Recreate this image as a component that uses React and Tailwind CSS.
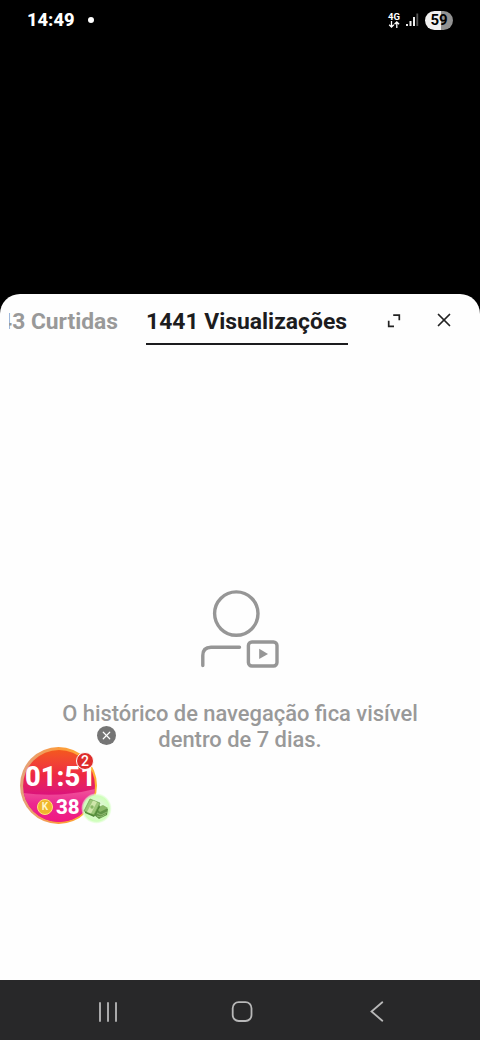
import { X } from "lucide-react";

const StatusBar = () => (
  <header className="flex h-10 shrink-0 items-center justify-between pl-[27px] pr-[27px] text-white">
    <div className="flex items-center gap-[13px]">
      <span className="pt-px text-[18.3px] leading-none font-extrabold">14:49</span>
      <span className="mt-px size-[6px] rounded-full bg-white" />
    </div>
    <div className="flex items-center">
      <div className="flex w-3 flex-col items-center">
        <span className="text-[9.5px] leading-[8px] font-bold">4G</span>
        <svg className="h-[7px] w-3" viewBox="0 0 12 7" fill="none" stroke="#fff" strokeWidth="1.3">
          <path d="M3.5 0v6M1.2 3.8 3.5 6l2.3-2.2M8.8 7V1M6.5 3.2 8.8 1l2.3 2.2" />
        </svg>
      </div>
      <svg className="ml-1.5 h-[14px] w-[13px]" viewBox="0 0 13 14">
        <rect x="0" y="11" width="2" height="2" fill="#eee" />
        <rect x="3.5" y="8" width="2" height="5" fill="#eee" />
        <rect x="7" y="4" width="2" height="9" fill="#eee" />
        <rect x="10.4" y="0.5" width="1.8" height="12.5" fill="#555" />
      </svg>
      <div className="ml-[6px] flex h-[19px] w-7 items-center justify-center rounded-full bg-linear-to-r from-[#f0f0f0] from-58% to-[#929292] to-58%">
        <span className="pt-px text-[15px] leading-none font-bold text-black">59</span>
      </div>
    </div>
  </header>
);

const Tabs = () => (
  <div className="flex h-[51px] shrink-0 items-start pl-[9px]">
    <div className="flex h-[51px] w-[109px] justify-end overflow-hidden">
      <span className="pt-[14px] text-[22.8px] leading-7 font-bold whitespace-nowrap text-[#999]">
        43 Curtidas
      </span>
    </div>
    <div className="ml-[28px] h-[51px] w-[202px] border-b-2 border-[#1c1c1e] pt-[14px] text-[22.9px] leading-7 font-bold whitespace-nowrap text-[#1c1c1e]">
      1441 Visualizações
    </div>
    <button aria-label="Expandir" className="mt-[20px] ml-[39px]">
      <svg className="size-[14px]" viewBox="0 0 14 14" fill="none" stroke="#222" strokeWidth="1.7">
        <path d="M6.2 1.2H12.3V6.2M1.7 6.8v5.5H7" />
      </svg>
    </button>
    <button aria-label="Fechar" className="mt-[15px] ml-[32px]">
      <X size={22} strokeWidth={1.9} color="#222" />
    </button>
  </div>
);

const EmptyHistory = () => (
  <div className="flex flex-col items-center pt-[244px]">
    <svg className="h-[80px] w-[80px]" viewBox="200 589 80 80" fill="none" stroke="#969696" strokeWidth="3.4">
      <circle cx="236.3" cy="613.6" r="21.7" />
      <path d="M202.8 665.5V655.5Q202.8 647.2 211 647.2H239.5" strokeLinecap="round" />
      <rect x="248.4" y="642" width="28.6" height="24" rx="3.5" />
      <path d="M259.2 648.7v10.4l8.8-5.2z" fill="#969696" stroke="none" />
    </svg>
    <p className="mt-[32px] w-[380px] text-center text-[21.9px] leading-[25.5px] font-medium text-[#999]">
      O histórico de navegação fica visível dentro de 7 dias.
    </p>
  </div>
);

const RewardTimer = () => (
  <div className="absolute top-[726px] left-[20px] h-[100px] w-[98px] text-white">
    <button aria-label="Fechar" className="absolute top-0 left-[77px] flex size-[19px] items-center justify-center rounded-full bg-[#757575]">
      <X size={13} strokeWidth={2.2} />
    </button>
    <div className="absolute top-[21px] left-0 size-[77px] rounded-full bg-linear-to-r from-[#e3a27c] via-[#fb9a3c] to-[#ffb233] p-[2.5px]">
      <div className="relative size-full overflow-hidden rounded-full bg-linear-to-b from-[#f4571c] via-[#ee2742] via-35% to-[#dd1478] to-60%">
        <svg className="absolute inset-0 size-full" viewBox="0 0 72 72">
          <defs>
            <linearGradient id="lower" x1="0" y1="0" x2="0" y2="1">
              <stop stopColor="#f0569a" />
              <stop offset="0.45" stopColor="#ec2890" />
              <stop offset="1" stopColor="#f01880" />
            </linearGradient>
          </defs>
          <path d="M0 43Q36 48 72 39V72H0z" fill="url(#lower)" />
        </svg>
      </div>
    </div>
    <span className="absolute top-[37px] left-[5px] text-[27.3px] leading-[29px] font-extrabold">01:51</span>
    <div className="absolute top-[70px] left-[17px] flex items-center gap-[3px]">
      <span className="flex size-[16px] items-center justify-center rounded-full border border-[#ffe477] bg-[#f0b62c] text-[10px] leading-none font-bold text-[#fff6c8]">
        K
      </span>
      <span className="pt-px text-[20.5px] leading-[21px] font-extrabold">38</span>
    </div>
    <span className="absolute top-[26px] left-[56px] flex size-[18px] items-center justify-center rounded-full border-[1.3px] border-white bg-[#de2d2b] text-[14px] leading-none font-medium">
      2
    </span>
    <svg className="absolute top-[67px] left-[61px] size-[31px]" viewBox="0 0 31 31">
      <defs>
        <radialGradient id="glow">
          <stop offset="0.5" stopColor="#dcf8d0" />
          <stop offset="0.85" stopColor="#ceffba" />
          <stop offset="1" stopColor="#e5ffda" stopOpacity="0.4" />
        </radialGradient>
      </defs>
      <circle cx="15.5" cy="15.5" r="15" fill="url(#glow)" />
      {/* back stack of notes */}
      <path d="m15 16 8-3 4 3-1 6-8 4-5-4z" fill="#5f9446" />
      <path d="m15 15 7-3 5 3-8 4z" fill="#8aba68" />
      <path d="m16 20 4 2 6-3M16 23l4 1 5-3" fill="none" stroke="#9cc77e" strokeWidth="0.8" />
      {/* front bundle */}
      <path d="m4 17 8 4 6-10 1 3-6 10-9-4z" fill="#4f8736" />
      <path d="m9 6 10 4-6 12-10-4z" fill="#9cc67a" stroke="#679f48" strokeWidth="0.7" />
      <path d="m12 7.5 4 1.6-6 11.5-4-1.6z" fill="#cfe6ab" />
      <circle cx="11" cy="14" r="1.7" fill="#87b765" />
    </svg>
  </div>
);

const NavBar = () => (
  <nav className="flex h-[60px] shrink-0 items-center bg-[#282829] pt-[3px] pl-[98px]">
    <svg className="h-5 w-5" viewBox="0 0 20 20" stroke="#b8b8b8" strokeWidth="1.8" strokeLinecap="round">
      <path d="M2 1v18M10 1v18M18 1v18" />
    </svg>
    <svg className="ml-[113px] h-[22px] w-[22px]" viewBox="0 0 22 22" fill="none" stroke="#b8b8b8" strokeWidth="1.8">
      <rect x="1.7" y="1.2" width="18.8" height="18.8" rx="6" />
    </svg>
    <svg className="ml-[116px] h-[22px] w-[16px]" viewBox="0 0 16 22" fill="none" stroke="#b8b8b8" strokeWidth="1.8" strokeLinecap="round">
      <path d="M13.3 1.3 2.5 10.5l10.8 9.2" />
    </svg>
  </nav>
);

export default function App() {
  return (
    <div className="relative flex h-[1040px] w-[480px] flex-col overflow-hidden bg-black font-['Roboto',sans-serif]">
      <StatusBar />
      <main className="mt-[254px] flex-1 rounded-t-[20px] bg-[#fefefe]">
        <Tabs />
        <EmptyHistory />
      </main>
      <NavBar />
      <RewardTimer />
    </div>
  );
}
